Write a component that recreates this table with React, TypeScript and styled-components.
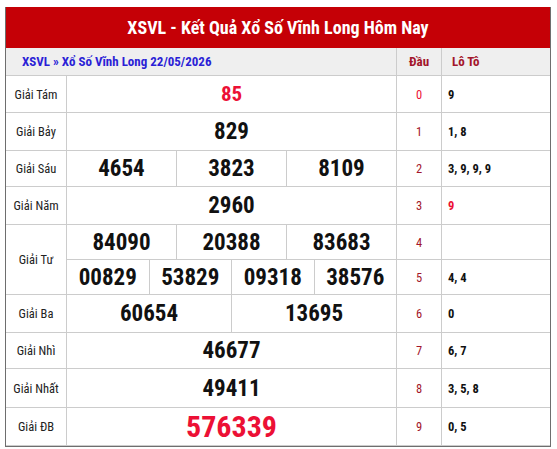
import React from "react";
import styled, { createGlobalStyle } from "styled-components";

const Global = createGlobalStyle`
  html, body { margin: 0; padding: 0; background: #ffffff; }
  body { font-family: "Roboto Condensed", Roboto, "Liberation Sans", sans-serif; font-stretch: condensed; }
`;

const Frame = styled.div`
  margin: 7px 0 0 5px;
  width: 546px;
  box-sizing: border-box;
  border: 1px solid #6e6e6e;
  border-top: none;
  font-family: "Roboto Condensed", Roboto, "Liberation Sans", sans-serif;
  font-stretch: condensed;
`;

const Title = styled.h1`
  margin: 0;
  height: 41px;
  background: #c50006;
  color: #ffffff;
  font-size: 18px;
  font-weight: 700;
  display: flex;
  align-items: center;
  justify-content: center;
`;

const COLS = "61px 330px 45px 1fr";

const SubHeader = styled.div`
  display: grid;
  grid-template-columns: ${COLS};
  height: 28px;
  background: #efefef;
  border-bottom: 1px solid #cccccc;
  box-sizing: border-box;
`;

const SubCell = styled.div<{ $span?: number; $pad?: number; $last?: boolean }>`
  grid-column: span ${(p) => p.$span ?? 1};
  display: flex;
  align-items: center;
  justify-content: ${(p) => (p.$pad !== undefined ? "flex-start" : "center")};
  padding-left: ${(p) => p.$pad ?? 0}px;
  border-right: ${(p) => (p.$last ? "none" : "1px solid #cccccc")};
  font-size: 13px;
  font-weight: 700;
  color: #a3162b;
`;

const CrumbText = styled.span`
  color: #2b1fd6;
`;

const Table = styled.div`
  display: grid;
  grid-template-columns: ${COLS};
  grid-template-rows: 37px 38px 36px 38px 35px 35px 38px 36px 39px 38px;
`;

const Cell = styled.div<{ $rows?: number }>`
  grid-row: span ${(p) => p.$rows ?? 1};
  box-sizing: border-box;
  border-right: 1px solid #cccccc;
  border-bottom: 1px solid #cccccc;
  display: flex;
  align-items: center;
  justify-content: center;
`;

const Label = styled(Cell)`
  font-size: 12.5px;
  color: #222222;
`;

const Results = styled(Cell)`
  align-items: stretch;
`;

const Num = styled.div<{ $size: number; $red?: boolean }>`
  flex: 1;
  display: flex;
  align-items: center;
  justify-content: center;
  font-size: ${(p) => p.$size}px;
  font-weight: 700;
  color: ${(p) => (p.$red ? "#ec1035" : "#111111")};
  & + & { border-left: 1px solid #cccccc; }
`;

const Dau = styled(Cell)<{ $hot?: boolean }>`
  font-size: 12.5px;
  color: ${(p) => (p.$hot ? "#ec1035" : "#a3162b")};
`;

const Loto = styled(Cell)<{ $hot?: boolean }>`
  border-right: none;
  justify-content: flex-start;
  padding-left: 6px;
  font-size: 12.5px;
  font-weight: 700;
  color: ${(p) => (p.$hot ? "#ec1035" : "#111111")};
`;

type Row = { label?: string; span?: number; nums: string[]; size: number; red?: boolean };

const rows: Row[] = [
  { label: "Giải Tám", nums: ["85"], size: 21, red: true },
  { label: "Giải Bảy", nums: ["829"], size: 23 },
  { label: "Giải Sáu", nums: ["4654", "3823", "8109"], size: 23 },
  { label: "Giải Năm", nums: ["2960"], size: 23 },
  { label: "Giải Tư", span: 2, nums: ["84090", "20388", "83683"], size: 23 },
  { nums: ["00829", "53829", "09318", "38576"], size: 23 },
  { label: "Giải Ba", nums: ["60654", "13695"], size: 23 },
  { label: "Giải Nhì", nums: ["46677"], size: 23 },
  { label: "Giải Nhất", nums: ["49411"], size: 23 },
  { label: "Giải ĐB", nums: ["576339"], size: 30, red: true },
];

const lotos = ["9", "1, 8", "3, 9, 9, 9", "9", "", "4, 4", "0", "6, 7", "3, 5, 8", "0, 5"];

export default function App() {
  return (
    <>
      <Global />
      <Frame>
        <Title>XSVL - Kết Quả Xổ Số Vĩnh Long Hôm Nay</Title>
        <SubHeader>
          <SubCell $span={2} $pad={16}>
            <CrumbText>XSVL » Xổ Số Vĩnh Long 22/05/2026</CrumbText>
          </SubCell>
          <SubCell>Đầu</SubCell>
          <SubCell $pad={10} $last>
            Lô Tô
          </SubCell>
        </SubHeader>
        <Table>
          {rows.map((r, i) => (
            <React.Fragment key={i}>
              {r.label && <Label $rows={r.span}>{r.label}</Label>}
              <Results>
                {r.nums.map((n) => (
                  <Num key={n} $size={r.size} $red={r.red}>
                    {n}
                  </Num>
                ))}
              </Results>
              <Dau $hot={i === 0}>{i}</Dau>
              <Loto $hot={i === 3}>{lotos[i]}</Loto>
            </React.Fragment>
          ))}
        </Table>
      </Frame>
    </>
  );
}
